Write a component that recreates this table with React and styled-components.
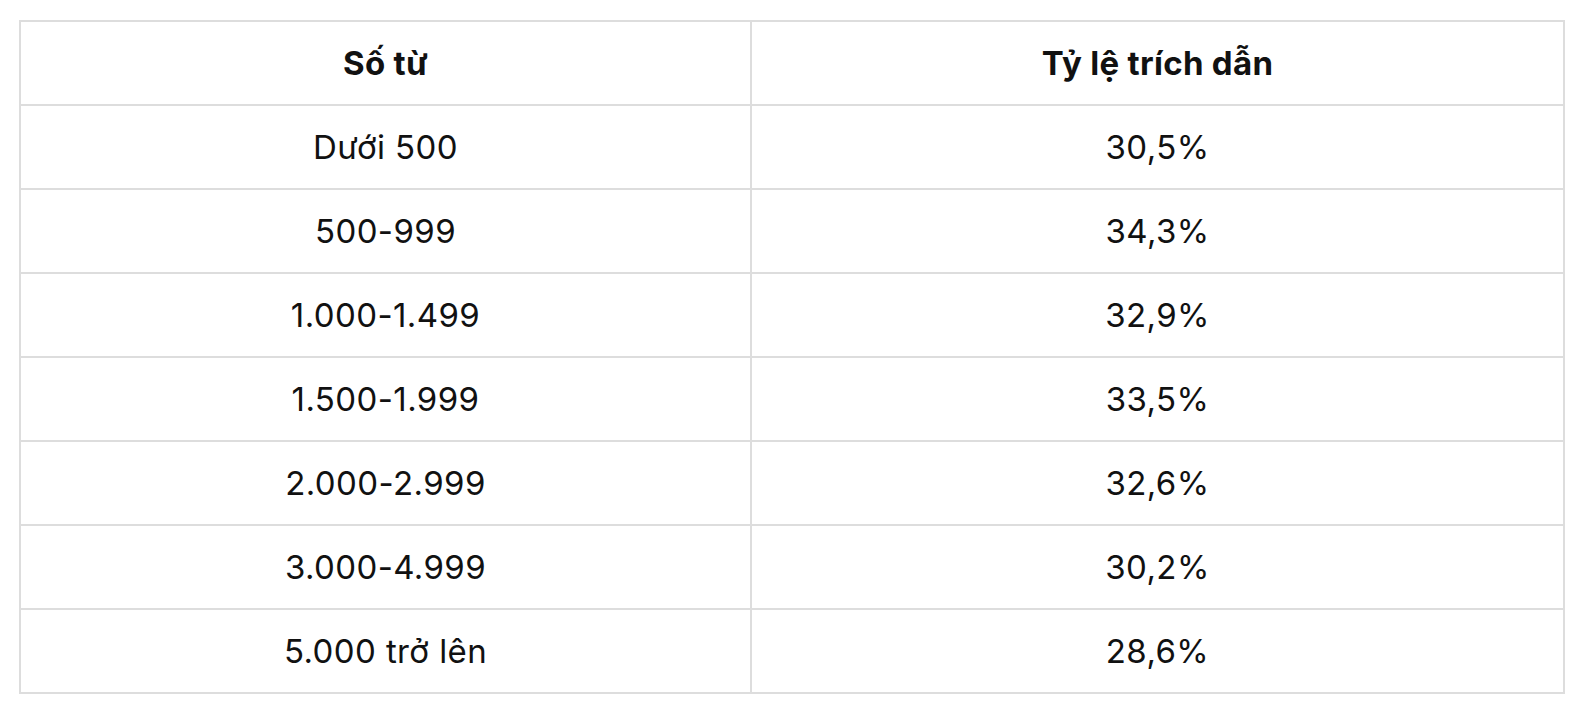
import styled, { createGlobalStyle } from 'styled-components';

const GlobalStyle = createGlobalStyle`
  body {
    margin: 0;
    background: #ffffff;
    font-family: Inter, "Noto Sans", sans-serif;
    color: #111111;
  }
`;

const Page = styled.div`
  padding: 20px 27px 0 19px;
`;

const Table = styled.table`
  width: 1544px;
  border-collapse: collapse;
  border: 2px solid #dddddd;
  table-layout: fixed;
`;

const Col = styled.col`
  width: ${(p) => p.$width}px;
`;

const HeadCell = styled.th`
  height: 82px;
  border: 2px solid #dddddd;
  text-align: center;
  font-size: 33px;
  font-weight: 700;
  letter-spacing: 0.3px;
  padding: 0 16px;
`;

const Cell = styled.td`
  height: 82px;
  border: 2px solid #dddddd;
  text-align: center;
  font-size: 33px;
  font-weight: 400;
  letter-spacing: 0.4px;
  padding: 0 16px;
`;

const rows = [
  ['Dưới 500', '30,5%'],
  ['500-999', '34,3%'],
  ['1.000-1.499', '32,9%'],
  ['1.500-1.999', '33,5%'],
  ['2.000-2.999', '32,6%'],
  ['3.000-4.999', '30,2%'],
  ['5.000 trở lên', '28,6%'],
];

export default function App() {
  return (
    <>
      <GlobalStyle />
      <Page>
        <Table>
          <colgroup>
            <Col $width={731} />
            <Col $width={813} />
          </colgroup>
          <thead>
            <tr>
              <HeadCell>Số từ</HeadCell>
              <HeadCell>Tỷ lệ trích dẫn</HeadCell>
            </tr>
          </thead>
          <tbody>
            {rows.map(([words, rate]) => (
              <tr key={words}>
                <Cell>{words}</Cell>
                <Cell>{rate}</Cell>
              </tr>
            ))}
          </tbody>
        </Table>
      </Page>
    </>
  );
}
